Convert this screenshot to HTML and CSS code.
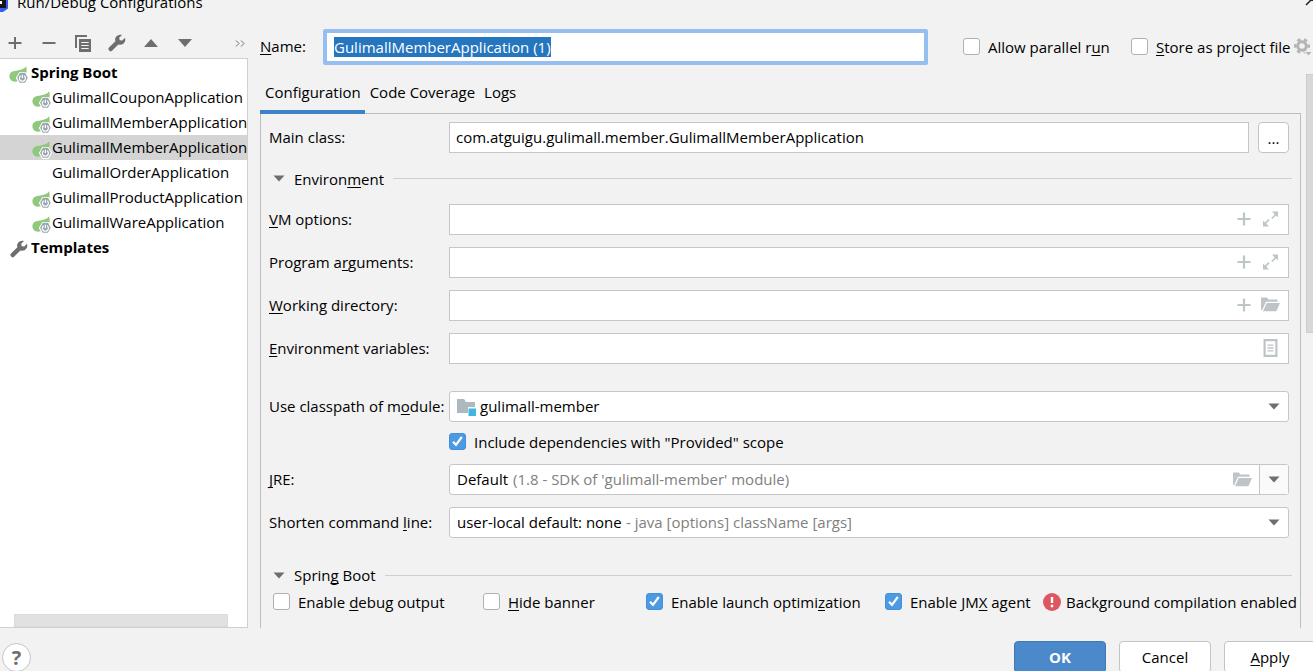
FILE: index.html
```html
<!DOCTYPE html>
<html lang="en">
<head>
<meta charset="utf-8">
<title>Run/Debug Configurations</title>
<link rel="stylesheet" href="styles.css">
</head>
<body>
<svg class="defs" aria-hidden="true">
  <symbol id="spring" viewBox="0 0 20 18">
    <path fill="#8fc97d" d="M17.2 .3C17.8 3.500 17.800 6 17 8.200L9 15.200C6 16 3.500 15.800 2.400 14.600 -.2 12.500 -.3 8.400 2.300 6.300 5 4 13.500 5.400 17.200 .3Z"/>
    <path fill="#fff" d="M10.300 6h6.200l3.500 6-3.500 6h-6.200l-3.500-6Z"/>
    <path fill="#9aa7b0" d="M10.800 6.800h5.200l2.700 5-2.700 5h-5.200l-2.700-5Z"/>
    <path fill="none" stroke="#fff" stroke-width="1.200" d="M11.700 9.800a3 3 0 1 0 3.400 0M13.400 8.700v3.200"/>
  </symbol>
  <symbol id="wrench" viewBox="0 0 18 18">
    <path fill="#6e6e6e" d="M17 3.800 14.200 6.600 11.700 6.200 11.200 3.800 14 1C11.200 .2 8.200 1.500 7.300 4.300 7 5.500 7.100 6.400 7.400 7.300L1 13.600C.2 14.500.2 15.400 1 16.300L1.700 17C2.500 17.600 3.300 17.500 4 16.800L10.400 10.400C13 11.400 15.900 10 17 7.400 17.400 6 17.400 4.800 17 3.800Z"/>
  </symbol>
  <symbol id="plus" viewBox="0 0 14 14"><path d="M7 .5v13M.5 7h13" fill="none" stroke="currentColor" stroke-width="2.200"/></symbol>
  <symbol id="expand" viewBox="0 0 16 16">
    <path fill="currentColor" d="M9.500 .5h6v6l-2-2-3.600 3.600-1.200-1.200 3.500-3.500zM.5 9.500l2 2 3.400-3.400 1.200 1.200-3.300 3.400 2.700 2.800h-6z"/>
  </symbol>
  <symbol id="folder" viewBox="0 0 19 15"><path fill="currentColor" d="M0 13V.5h5.800l1.700 2h9v2.300H5L1.200 13zM5.700 6H19l-3.600 8.200H2z"/></symbol>
  <symbol id="list" viewBox="0 0 15 18"><path fill="none" stroke="currentColor" stroke-width="2.200" d="M1.600 1.100h11.800v15.800H1.600z"/><path stroke="currentColor" stroke-width="1.300" d="M4.500 6.200h6M4.500 9h6M4.500 11.800h6"/></symbol>
  <symbol id="down" viewBox="0 0 12 7"><path fill="#6e6e6e" d="M.5 .5h11L6 6.500z"/></symbol>
</svg>

<div class="dialog">
  <header class="titlebar">
    <svg class="logo" width="8" height="12" viewBox="0 0 8 12"><path fill="#3b5bea" d="M0 0h8v8.500L3 12H0z"/><path fill="#16161c" d="M0 0h6v8H0z"/><path fill="#fff" d="M0 1h2v3H0z"/></svg>
    <span class="title">Run/Debug Configurations</span>
    <button class="close" aria-label="Close"><svg width="14" height="14" viewBox="0 0 14 14"><path d="M1 1l12 12M13 1L1 13" fill="none" stroke="#222" stroke-width="1.500"/></svg></button>
  </header>

  <div class="body">
    <aside class="sidebar">
      <div class="toolbar">
        <button aria-label="Add"><svg width="14" height="14" viewBox="0 0 14 14"><path d="M7 1v12M.5 7h13" fill="none" stroke="#6e6e6e" stroke-width="2"/></svg></button>
        <button aria-label="Remove"><svg width="14" height="14" viewBox="0 0 14 14"><path d="M.5 7h13" fill="none" stroke="#6e6e6e" stroke-width="2"/></svg></button>
        <button aria-label="Copy"><svg width="16" height="17" viewBox="0 0 16 17"><path fill="#6e6e6e" d="M0 0h12v2H2v11H0zM4 4h12v13H4z"/><path stroke="#f2f2f2" stroke-width="1.200" d="M6.300 7.500h7.400M6.300 10.500h7.400M6.300 13.500h7.400"/></svg></button>
        <button aria-label="Edit templates"><svg width="18" height="18"><use href="#wrench"/></svg></button>
        <button aria-label="Move up"><svg width="14" height="8" viewBox="0 0 14 8"><path fill="#6e6e6e" d="M0 8h14L7 0z"/></svg></button>
        <button aria-label="Move down"><svg width="14" height="8" viewBox="0 0 14 8"><path fill="#6e6e6e" d="M0 0h14L7 8z"/></svg></button>
        <button class="more" aria-label="More"><svg width="10" height="7" viewBox="0 0 10 7"><path d="M1 .5l3 3-3 3M6 .5l3 3-3 3" fill="none" stroke="#6e6e6e"/></svg></button>
      </div>
      <div class="tree">
        <ul class="rows">
          <li class="row root"><svg class="icon"><use href="#spring"/></svg>Spring Boot</li>
          <li class="row"><svg class="icon"><use href="#spring"/></svg>GulimallCouponApplication</li>
          <li class="row"><svg class="icon"><use href="#spring"/></svg>GulimallMemberApplication</li>
          <li class="row selected"><svg class="icon"><use href="#spring"/></svg>GulimallMemberApplication</li>
          <li class="row"><span class="icon"></span>GulimallOrderApplication</li>
          <li class="row"><svg class="icon"><use href="#spring"/></svg>GulimallProductApplication</li>
          <li class="row"><svg class="icon"><use href="#spring"/></svg>GulimallWareApplication</li>
          <li class="row root"><svg class="icon tool"><use href="#wrench"/></svg>Templates</li>
        </ul>
        <div class="hscroll"></div>
      </div>
    </aside>

    <main class="main">
      <div class="namerow">
        <label class="label" for="name"><u>N</u>ame:</label>
        <input id="name" class="name" type="text" value="GulimallMemberApplication (1)">
        <label class="check"><input type="checkbox"><span>Allow parallel r<u>u</u>n</span></label>
        <label class="check"><input type="checkbox"><span><u>S</u>tore as project file</span></label>
        <button class="gear" aria-label="Storage options"><svg width="18" height="18" viewBox="0 0 18 18"><circle cx="8" cy="8" r="4.300" fill="none" stroke="#b4b4b4" stroke-width="3"/><circle cx="8" cy="8" r="6.700" fill="none" stroke="#b4b4b4" stroke-width="2.600" stroke-dasharray="3.500 3.516" stroke-dashoffset="1.750"/><path fill="#b4b4b4" stroke="#f2f2f2" d="M10.500 13.500h8l-4 4.500z"/></svg></button>
      </div>

      <div class="content">
        <div class="pane">
          <div class="tabs" role="tablist">
            <button class="tab active" role="tab" aria-selected="true">Configuration</button>
            <button class="tab" role="tab">Code Coverage</button>
            <button class="tab" role="tab">Logs</button>
          </div>
          <div class="panel">
            <div class="line">
              <label class="label" for="main-class">Main class:</label>
              <div class="pair">
                <input id="main-class" class="field" type="text" value="com.atguigu.gulimall.member.GulimallMemberApplication">
                <button class="browse" aria-label="Browse">...</button>
              </div>
            </div>

            <h2 class="section env"><svg width="12" height="7"><use href="#down"/></svg><span>Environ<u>m</u>ent</span></h2>

            <div class="group">
              <div class="line">
                <label class="label" for="vm"><u>V</u>M options:</label>
                <div class="field box"><input id="vm" type="text"><button aria-label="Insert macro"><svg width="14" height="14"><use href="#plus"/></svg></button><button aria-label="Expand"><svg width="17" height="16"><use href="#expand"/></svg></button></div>
              </div>
              <div class="line">
                <label class="label" for="args">Program a<u>r</u>guments:</label>
                <div class="field box"><input id="args" type="text"><button aria-label="Insert macro"><svg width="14" height="14"><use href="#plus"/></svg></button><button aria-label="Expand"><svg width="17" height="16"><use href="#expand"/></svg></button></div>
              </div>
              <div class="line">
                <label class="label" for="dir"><u>W</u>orking directory:</label>
                <div class="field box"><input id="dir" type="text"><button aria-label="Insert macro"><svg width="14" height="14"><use href="#plus"/></svg></button><button aria-label="Browse folders"><svg width="19" height="15"><use href="#folder"/></svg></button></div>
              </div>
              <div class="line">
                <label class="label" for="vars"><u>E</u>nvironment variables:</label>
                <div class="field box"><input id="vars" type="text"><button aria-label="Edit variables"><svg width="15" height="18"><use href="#list"/></svg></button></div>
              </div>
            </div>

            <div class="line module">
              <label class="label" for="module">Use classpath of m<u>o</u>dule:</label>
              <div class="field combo">
                <svg class="modicon" width="19" height="18" viewBox="0 0 19 18"><path fill="#adb8bf" d="M0 1h7l2 3h9v5h-7v6H0z"/><path fill="#40b6e0" d="M11.500 10.500H19V18h-7.500z"/></svg>
                <select id="module" class="grow"><option>gulimall-member</option></select>
                <svg class="arrow"><use href="#down"/></svg>
              </div>
            </div>

            <div class="line provided">
              <label class="check"><input type="checkbox" checked><span>Include dependencies with "Provided" scope</span></label>
            </div>

            <div class="group">
              <div class="line">
                <label class="label" for="jre"><u>J</u>RE:</label>
                <div class="field combo">
                  <select id="jre"><option>Default</option></select>
                  <span class="hint">(1.8 - SDK of 'gulimall-member' module)</span>
                  <button class="open" aria-label="Browse folders"><svg width="19" height="15"><use href="#folder"/></svg></button>
                  <span class="split"><svg class="arrow"><use href="#down"/></svg></span>
                </div>
              </div>
              <div class="line">
                <label class="label" for="shorten">Shorten command <u>l</u>ine:</label>
                <div class="field combo">
                  <select id="shorten"><option>user-local default: none</option></select>
                  <span class="hint">- java [options] className [args]</span>
                  <svg class="arrow"><use href="#down"/></svg>
                </div>
              </div>
            </div>

            <h2 class="section boot"><svg width="12" height="7"><use href="#down"/></svg><span>Sprin<u>g</u> Boot</span></h2>

            <div class="options">
              <label class="check"><input type="checkbox"><span>Enable <u>d</u>ebug output</span></label>
              <label class="check"><input type="checkbox"><span><u>H</u>ide banner</span></label>
              <label class="check"><input type="checkbox" checked><span>Enable launch optimi<u>z</u>ation</span></label>
              <label class="check"><input type="checkbox" checked><span>Enable JM<u>X</u> agent</span></label>
              <div class="warn"><svg width="18" height="18" viewBox="0 0 18 18"><circle cx="9" cy="9" r="9" fill="#db5860"/><path stroke="#fff" stroke-width="2.400" d="M9 4v6M9 11.800v2.400"/></svg><span>Background compilation enabled</span></div>
            </div>
          </div>
        </div>
        <div class="vscroll"></div>
      </div>
    </main>
  </div>

  <footer class="footer">
    <button class="help" aria-label="Help">?</button>
    <button class="btn primary">OK</button>
    <button class="btn">Cancel</button>
    <button class="btn last"><span><u>A</u>pply</span></button>
  </footer>
</div>
<script src="script.js"></script>
</body>
</html>
```

FILE: styles.css
```css
* { box-sizing: border-box; }
body {
  margin: 0;
  overflow: hidden;
  background: #f2f2f2;
  color: #000;
  font: 15px/20px "Open Sans", "Noto Sans", sans-serif;
  white-space: nowrap;
}
button, input, select { font: inherit; color: inherit; margin: 0; }
button { border: 0; padding: 0; background: none; }
svg { display: block; flex: none; }
u { text-decoration-skip-ink: none; text-underline-offset: 2px; text-decoration-thickness: 1px; }
.defs { position: absolute; width: 0; height: 0; }

.dialog { display: flex; flex-direction: column; height: 100vh; }
.titlebar { display: flex; align-items: flex-start; height: 18px; overflow: hidden; flex: none; }
.title { margin: -8px 0 0 9px; flex: 1; }
.close { margin: -8px -6px 0 0; }
.body { display: flex; flex: 1; min-height: 0; }

.sidebar { width: 248px; flex: none; display: flex; flex-direction: column; }
.toolbar { display: flex; height: 40px; padding: 10px 3px 0 6px; align-items: center; }
.toolbar button { width: 18px; margin-right: 16px; display: grid; place-items: center; }
.toolbar .more { width: 10px; margin: 0 0 0 auto; }
.tree {
  flex: 1; display: flex; flex-direction: column; overflow: hidden;
  background: #fff; border: 1px solid #d0d0d0; border-left: 0; padding-top: 1px;
}
.rows { list-style: none; margin: 0; padding: 0; flex: 1; }
.row { display: flex; align-items: center; height: 25px; padding: 0 0 2px 32px; }
.row.root { padding-left: 9px; font-weight: 700; }
.row .icon { width: 20px; height: 18px; margin-top: 6px; flex: none; }
.row.root .icon { margin-right: 2px; }
.row .icon.tool { margin-top: 4px; }
.row.selected { background: #d4d4d4; }
.hscroll { height: 13px; margin: 0 19px 0 14px; background: #e1e1e1; border: 1px solid #dadada; }

.main { flex: 1; min-width: 0; margin-left: 12px; display: flex; flex-direction: column; }
.label { padding-bottom: 2px; }
.namerow {
  display: grid; grid-template-columns: 63px 1fr 168px 163px 19px;
  align-items: center; height: 56px; padding-top: 2px;
}
.name {
  height: 36px; margin-right: 35px; padding: 0 7px 1px; outline: 0;
  border: 4px solid #94bff0; border-radius: 2px; background: #fff;
}
.name::selection { background: #2675bf; color: #fff; }
.check { display: flex; align-items: center; gap: 8px; }
input[type="checkbox"] {
  appearance: none; width: 17px; height: 17px; flex: none; margin-bottom: 2px;
  border: 1px solid #b0b0b0; border-radius: 3px; background: #fff;
}
input[type="checkbox"]:checked {
  border-color: #4390d8;
  background: #4b9ae2 url("data:image/svg+xml,%3Csvg xmlns='http://www.w3.org/2000/svg' viewBox='0 0 15 15'%3E%3Cpath d='M3 7.800l3 3L11.800 3' fill='none' stroke='white' stroke-width='2.200'/%3E%3C/svg%3E");
}

.content { flex: 1; min-height: 0; display: flex; gap: 5px; }
.vscroll { width: 7px; height: 259px; background: #d8d8d8; border: 1px solid #cdcdcd; border-right: 0; }
.pane { flex: 1; min-width: 0; display: flex; flex-direction: column; }
.tabs { display: flex; height: 40px; margin-bottom: -1px; position: relative; }
.tab { padding: 0 4px 0 5px; border-bottom: 4px solid transparent; }
.tab.active { border-color: #3d81c9; }
.panel { flex: 1; border: 1px solid #bdbdbd; border-bottom: 0; padding: 8px 11px 0 8px; }

.line { display: grid; grid-template-columns: 180px 1fr; align-items: center; }
.group { display: grid; gap: 12px; }
.pair { display: flex; gap: 9px; }
.field {
  height: 31px; min-width: 0; flex: 1; width: 100%;
  border: 1px solid #c6c6c6; background: #fff; padding: 0 6px 2px; outline: 0;
}
.browse { width: 31px; height: 31px; border: 1px solid #c4c4c4; border-radius: 4px; background: #fff; }
.box { display: flex; align-items: center; gap: 10px; padding-right: 8px; color: #bec5c9; }
.box input { flex: 1; min-width: 0; border: 0; outline: 0; background: none; color: #000; }
.box button { display: grid; place-items: center; }
.box button:last-child { width: 19px; }

.section { display: flex; align-items: center; gap: 9px; margin: 0 -3px 0 0; padding-left: 4px; font-size: 15px; font-weight: 400; }
.section::after { content: ""; flex: 1; height: 1px; background: #cfcfcf; }
.env { height: 51px; }
.boot { height: 26px; margin-top: 24px; }
.module { margin-top: 27px; }
.provided { height: 42px; padding-bottom: 2px; }
.provided .check { grid-column: 2; }

.combo { display: flex; align-items: center; border-radius: 3px; padding: 0 8px 0 7px; }
.combo select { appearance: none; border: 0; padding: 0 0 2px; background: none; outline: 0; }
.combo .grow { flex: 1; }
.combo .modicon { margin-right: 4px; }
.combo .hint { flex: 1; color: #808080; padding-bottom: 2px; margin-left: 4px; }
.combo .open { color: #bec5c9; margin-right: 7px; }
.combo .arrow { width: 12px; height: 7px; }
.split { align-self: stretch; display: flex; align-items: center; padding: 0 8px; margin-right: -8px; border-left: 1px solid #c6c6c6; background: #fafafa; }

.options { display: grid; grid-template-columns: 210px 163px 239px 158px 1fr; align-items: center; height: 28px; padding-left: 4px; }
.warn { display: flex; align-items: center; gap: 5px; }

.footer { display: flex; height: 43px; flex: none; overflow: hidden; padding: 13px 0 0 2px; align-items: flex-start; }
.help {
  width: 29px; height: 29px; margin: 2px auto 0 0;
  border: 1px solid #c4c4c4; border-radius: 50%; background: #fff;
  color: #6e6e6e; font-size: 20px; font-weight: 700;
}
.btn { width: 92px; height: 32px; flex: none; margin-right: 13px; border: 1px solid #c4c4c4; border-radius: 4px; background: #fff; }
.btn.primary { background: #4c89ca; border-color: #4079b6; color: #fff; font-weight: 700; }
.btn.last { margin-right: -3px; }
```

FILE: script.js
```js
const nameField = document.getElementById("name");
nameField.focus();
nameField.select();
```
